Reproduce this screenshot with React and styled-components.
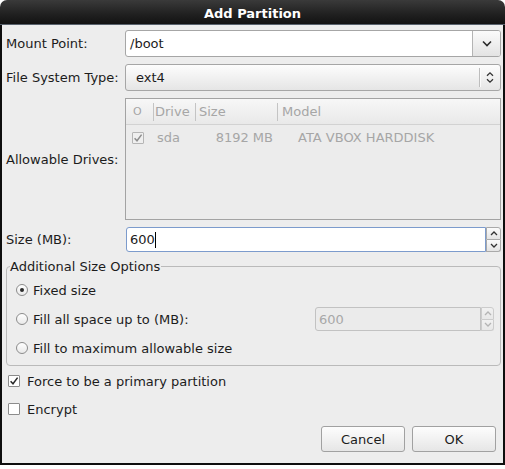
import React from "react";
import styled, { createGlobalStyle } from "styled-components";

const Global = createGlobalStyle`
  html, body { margin: 0; padding: 0; background: #ffffff; }
  body {
    font-family: "DejaVu Sans", "Liberation Sans", sans-serif;
    font-size: 13px;
    color: #1c1c1c;
  }
  #root { width: 505px; height: 469px; }
`;

const Window = styled.div`
  width: 505px;
  height: 465px;
  display: flex;
  flex-direction: column;
  border-radius: 7px 7px 0 0;
  overflow: hidden;
`;

const TitleBar = styled.div`
  height: 25px;
  flex: none;
  box-sizing: border-box;
  padding-top: 2px;
  display: flex;
  align-items: center;
  justify-content: center;
  background: linear-gradient(#3a3a3a, #222222 55%, #121212);
  border-bottom: 1px solid #59626d;
  color: #ffffff;
  font-weight: bold;
  font-size: 13px;
`;

const Body = styled.div`
  flex: 1;
  display: flex;
  flex-direction: column;
  background: #ededed;
  border: 2px solid #0e0e0e;
  border-top: none;
  padding: 5px 2px 0 4px;
`;

const FormGrid = styled.div`
  display: grid;
  grid-template-columns: 119px 1fr;
  row-gap: 7px;
  align-items: center;
`;

const Label = styled.div`
  white-space: nowrap;
`;

const ComboBox = styled.div`
  display: flex;
  height: 27px;
  box-sizing: border-box;
  border: 1px solid #a6a6a6;
  border-radius: 3px;
  overflow: hidden;
  background: #ffffff;
`;

const ComboEntry = styled.div`
  flex: 1;
  display: flex;
  align-items: center;
  padding-left: 4px;
`;

const ComboButton = styled.div`
  width: 27px;
  display: flex;
  align-items: center;
  justify-content: center;
  border-left: 1px solid #b4b4b4;
  background: linear-gradient(#fbfbfb, #e3e3e3);
`;

const SelectButton = styled.div`
  display: flex;
  align-items: center;
  height: 27px;
  box-sizing: border-box;
  border: 1px solid #a6a6a6;
  border-radius: 3px;
  background: linear-gradient(#fdfdfd, #e5e5e5);
  padding-left: 10px;
`;

const SelectText = styled.span`
  flex: 1;
`;

const VSeparator = styled.div`
  width: 1px;
  height: 19px;
  background: #bdbdbd;
  box-shadow: 1px 0 0 #fbfbfb;
`;

const SelectArrow = styled.div`
  width: 20px;
  display: flex;
  align-items: center;
  justify-content: center;
`;

const TreeView = styled.div`
  height: 122px;
  box-sizing: border-box;
  border: 1px solid #a3a3a3;
  background: #ececec;
  display: flex;
  flex-direction: column;
  color: #a6a6a6;
`;

const columns = "27px 42px 82px 1fr";

const TreeHeader = styled.div`
  display: grid;
  grid-template-columns: ${columns};
  height: 26px;
  box-sizing: border-box;
  background: linear-gradient(#f7f7f7, #e9e9e9);
  border-bottom: 1px solid #d2d2d2;
`;

const HeaderCell = styled.div`
  display: flex;
  align-items: center;
  padding-left: ${(p) => p.$pad}px;
  background-image: ${(p) =>
    p.$sep ? "linear-gradient(#c4c4c4, #c4c4c4)" : "none"};
  background-size: 1px 18px;
  background-position: left center;
  background-repeat: no-repeat;
  font-size: ${(p) => (p.$small ? "11px" : "13px")};
`;

const TreeRow = styled.div`
  display: grid;
  grid-template-columns: ${columns};
  height: 25px;
  align-items: center;
`;

const RowCell = styled.div`
  display: flex;
  align-items: center;
  justify-content: ${(p) => (p.$right ? "flex-end" : "flex-start")};
  padding-left: ${(p) => p.$pl || 0}px;
  padding-right: ${(p) => p.$pr || 0}px;
  white-space: nowrap;
`;

const Spin = styled.div`
  display: flex;
  height: ${(p) => p.$h}px;
  width: ${(p) => (p.$w ? `${p.$w}px` : "auto")};
  margin-left: ${(p) => p.$ml || 0}px;
`;

const SpinEntry = styled.div`
  flex: 1;
  display: flex;
  align-items: center;
  box-sizing: border-box;
  padding-left: 3px;
  border: 1px solid ${(p) => (p.$disabled ? "#c2c2c2" : "#7c9bcc")};
  border-radius: 3px 0 0 3px;
  background: ${(p) => (p.$disabled ? "#ebebeb" : "#ffffff")};
  color: ${(p) => (p.$disabled ? "#a8a8a8" : "#1c1c1c")};
`;

const Caret = styled.span`
  display: inline-block;
  width: 0;
  height: 16px;
  border-left: 1px solid #000;
`;

const SpinButtons = styled.div`
  width: ${(p) => p.$w}px;
  display: flex;
  flex-direction: column;
`;

const SpinHalf = styled.div`
  flex: 1;
  display: flex;
  align-items: center;
  justify-content: center;
  box-sizing: border-box;
  border: 1px solid ${(p) => (p.$disabled ? "#cccccc" : "#a9a9a9")};
  border-top: ${(p) =>
    p.$bottom ? "none" : `1px solid ${p.$disabled ? "#cccccc" : "#a9a9a9"}`};
  border-radius: ${(p) => (p.$bottom ? "0 0 3px 0" : "0 3px 0 0")};
  background: ${(p) =>
    p.$disabled
      ? "linear-gradient(#f1f1f1, #e8e8e8)"
      : "linear-gradient(#fbfbfb, #e4e4e4)"};
`;

const Frame = styled.fieldset`
  margin: 7px 0 0 0;
  padding: 0;
  border: 1px solid #bababa;
  border-radius: 4px;
  min-width: 0;
`;

const Legend = styled.legend`
  padding: 0 1px 0 0;
  margin-left: 3px;
  line-height: 15px;
`;

const FrameContent = styled.div`
  display: flex;
  flex-direction: column;
  gap: 5px;
  padding: 4px 6px 5px 9px;
`;

const OptionRow = styled.label`
  display: flex;
  align-items: center;
  height: 24px;
  gap: ${(p) => p.$gap}px;
  padding-left: ${(p) => p.$pl || 0}px;
`;

const Grow = styled.span`
  flex: 1;
`;

const RadioCircle = styled.span`
  width: 12px;
  height: 12px;
  box-sizing: border-box;
  border-radius: 50%;
  border: 1px solid #8c8c8c;
  background: linear-gradient(#ffffff, #e9e9e9);
  display: flex;
  align-items: center;
  justify-content: center;
  flex: none;
  &::after {
    content: "";
    width: 4px;
    height: 4px;
    border-radius: 50%;
    background: ${(p) => (p.$checked ? "#2a2a2a" : "transparent")};
  }
`;

const CheckBox = styled.span`
  width: 12px;
  height: 12px;
  box-sizing: border-box;
  border: 1px solid ${(p) => (p.$disabled ? "#b5b5b5" : "#8c8c8c")};
  border-radius: 1px;
  background: ${(p) => (p.$disabled ? "#efefef" : "#ffffff")};
  display: flex;
  align-items: center;
  justify-content: center;
  flex: none;
`;

const CheckList = styled.div`
  display: flex;
  flex-direction: column;
  gap: 4px;
  margin-top: 3px;
`;

const ButtonBar = styled.div`
  display: flex;
  justify-content: flex-end;
  gap: 7px;
  margin-top: 5px;
  padding-right: 5px;
`;

const Button = styled.button`
  width: 84px;
  height: 26px;
  box-sizing: border-box;
  border: 1px solid #a1a1a1;
  border-radius: 3px;
  background: linear-gradient(#fdfdfd, #e6e6e6);
  font-family: inherit;
  font-size: 13px;
  color: #1c1c1c;
  padding: 0;
`;

const ChevronDown = () => (
  <svg width="10" height="7" viewBox="0 0 10 7">
    <path d="M1 1.5 L5 5.5 L9 1.5" fill="none" stroke="#2c2c2c" strokeWidth="1.6" />
  </svg>
);

const UpDown = () => (
  <svg width="8" height="13" viewBox="0 0 8 13">
    <path d="M1 4.8 L4 1.8 L7 4.8" fill="none" stroke="#333" strokeWidth="1.3" />
    <path d="M1 8.2 L4 11.2 L7 8.2" fill="none" stroke="#333" strokeWidth="1.3" />
  </svg>
);

const SpinArrow = ({ up, color }) => (
  <svg width="8" height="5" viewBox="0 0 8 5">
    <path
      d={up ? "M1 4 L4 1 L7 4" : "M1 1 L4 4 L7 1"}
      fill="none"
      stroke={color}
      strokeWidth="1.3"
    />
  </svg>
);

const Check = ({ color }) => (
  <svg width="10" height="10" viewBox="0 0 10 10">
    <path d="M1.6 5.2 L4 7.8 L8.6 1.6" fill="none" stroke={color} strokeWidth="1.5" />
  </svg>
);

export default function App() {
  return (
    <>
      <Global />
      <Window>
        <TitleBar>Add Partition</TitleBar>
        <Body>
          <FormGrid>
            <Label>Mount Point:</Label>
            <ComboBox>
              <ComboEntry>/boot</ComboEntry>
              <ComboButton>
                <ChevronDown />
              </ComboButton>
            </ComboBox>

            <Label>File System Type:</Label>
            <SelectButton>
              <SelectText>ext4</SelectText>
              <VSeparator />
              <SelectArrow>
                <UpDown />
              </SelectArrow>
            </SelectButton>

            <Label>Allowable Drives:</Label>
            <TreeView>
              <TreeHeader>
                <HeaderCell $pad={7} $small>O</HeaderCell>
                <HeaderCell $pad={2} $sep>Drive</HeaderCell>
                <HeaderCell $pad={4} $sep>Size</HeaderCell>
                <HeaderCell $pad={5} $sep>Model</HeaderCell>
              </TreeHeader>
              <TreeRow>
                <RowCell $pl={6}>
                  <CheckBox $disabled>
                    <Check color="#8e8e8e" />
                  </CheckBox>
                </RowCell>
                <RowCell $pl={4}>sda</RowCell>
                <RowCell $right $pr={4}>8192 MB</RowCell>
                <RowCell $pl={21}>ATA VBOX HARDDISK</RowCell>
              </TreeRow>
            </TreeView>

            <Label>Size (MB):</Label>
            <Spin $h={25} $ml={1}>
              <SpinEntry>
                600
                <Caret />
              </SpinEntry>
              <SpinButtons $w={15}>
                <SpinHalf>
                  <SpinArrow up color="#333" />
                </SpinHalf>
                <SpinHalf $bottom>
                  <SpinArrow color="#333" />
                </SpinHalf>
              </SpinButtons>
            </Spin>
          </FormGrid>

          <Frame>
            <Legend>Additional Size Options</Legend>
            <FrameContent>
              <OptionRow $gap={5}>
                <RadioCircle $checked />
                Fixed size
              </OptionRow>
              <OptionRow $gap={5}>
                <RadioCircle />
                Fill all space up to (MB):
                <Grow />
                <Spin $h={24} $w={179}>
                  <SpinEntry $disabled>600</SpinEntry>
                  <SpinButtons $w={13}>
                    <SpinHalf $disabled>
                      <SpinArrow up color="#b4b4b4" />
                    </SpinHalf>
                    <SpinHalf $disabled $bottom>
                      <SpinArrow color="#b4b4b4" />
                    </SpinHalf>
                  </SpinButtons>
                </Spin>
              </OptionRow>
              <OptionRow $gap={5}>
                <RadioCircle />
                Fill to maximum allowable size
              </OptionRow>
            </FrameContent>
          </Frame>

          <CheckList>
            <OptionRow $gap={7} $pl={2}>
              <CheckBox>
                <Check color="#2a2a2a" />
              </CheckBox>
              Force to be a primary partition
            </OptionRow>
            <OptionRow $gap={7} $pl={2}>
              <CheckBox />
              Encrypt
            </OptionRow>
          </CheckList>

          <ButtonBar>
            <Button>Cancel</Button>
            <Button>OK</Button>
          </ButtonBar>
        </Body>
      </Window>
    </>
  );
}
